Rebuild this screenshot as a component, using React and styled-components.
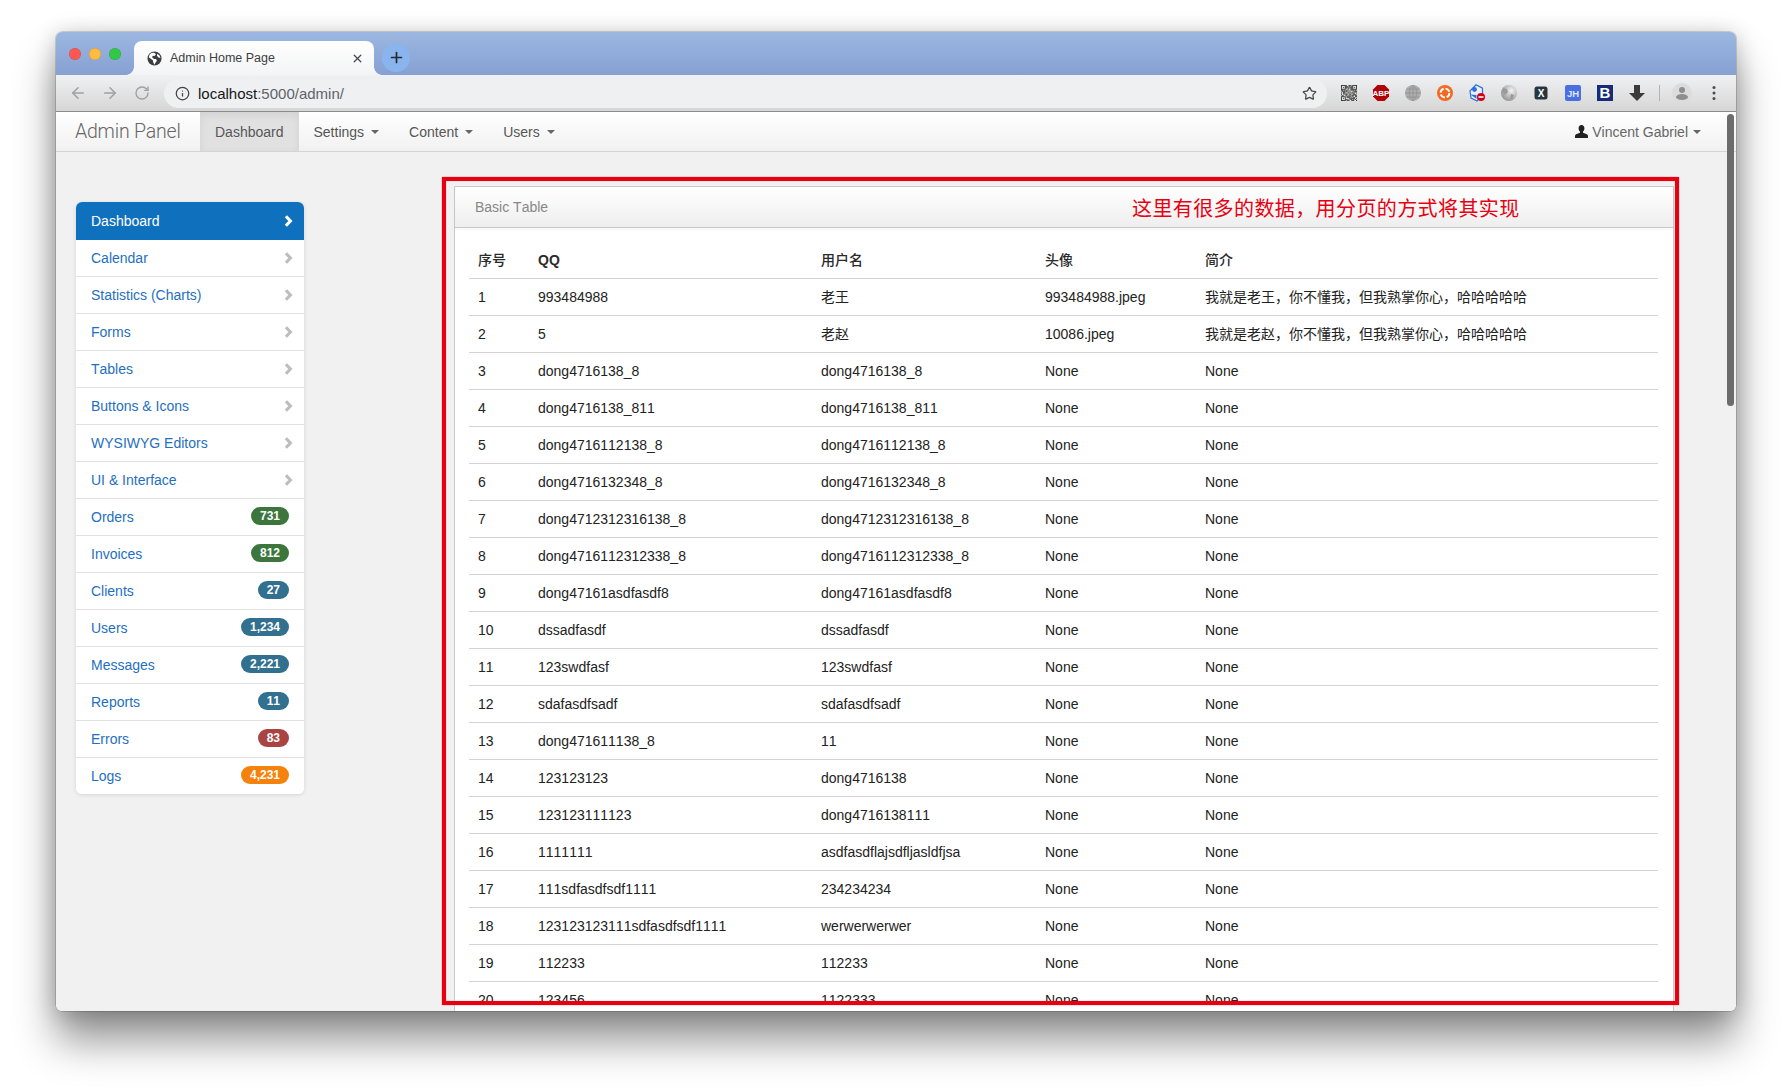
import React from 'react';
import styled, { createGlobalStyle } from 'styled-components';
import { ArrowLeft, ArrowRight, RotateCw, Info, Star, X, Plus } from 'lucide-react';

const Global = createGlobalStyle`
  html, body { margin: 0; padding: 0; background: #fff; overflow: hidden; }
  body { font-family: "Liberation Sans", "Noto Sans CJK SC", sans-serif; font-size: 14px; color: #333; font-kerning: none; }
  * { box-sizing: border-box; }
`;

const Desktop = styled.div`
  height: 1091px;
  padding: 32px 0 0 56px;
  overflow: hidden;
  background: #fff;
`;
const Win = styled.div`
  position: relative;
  width: 1680px;
  height: 979px;
  border-radius: 6px;
  overflow: hidden;
  display: flex;
  flex-direction: column;
`;
const WinShadow = styled.div`
  width: 1680px;
  height: 979px;
  border-radius: 6px;
  box-shadow: 0 30px 42px rgba(0,0,0,.42), 0 2px 22px rgba(0,0,0,.22), 0 0 0 .5px rgba(0,0,0,.28);
`;
const Strip = styled.div`
  height: 43px;
  flex: none;
  display: flex;
  align-items: flex-end;
  padding-left: 13px;
  background: linear-gradient(#9db7e2, #85a0d2);
`;
const Lights = styled.div`
  align-self: flex-start;
  display: flex;
  gap: 8px;
  margin: 16px 13px 0 0;
`;
const Light = styled.span`
  width: 12px;
  height: 12px;
  border-radius: 50%;
  background: ${p => p.$c};
  box-shadow: inset 0 0 0 .5px rgba(0,0,0,.15);
`;
const Tab = styled.div`
  position: relative;
  width: 240px;
  height: 34px;
  display: flex;
  align-items: center;
  padding: 0 10px 0 13px;
  border-radius: 8px 8px 0 0;
  background: linear-gradient(#fff, #f3f4f5);
  &::before, &::after {
    content: "";
    position: absolute;
    bottom: 0;
    width: 8px;
    height: 8px;
  }
  &::before { left: -8px; background: radial-gradient(circle at 0 0, transparent 7.5px, #f3f4f5 8px); }
  &::after { right: -8px; background: radial-gradient(circle at 100% 0, transparent 7.5px, #f3f4f5 8px); }
`;
const TabTitle = styled.span`
  flex: 1;
  margin-left: 8px;
  font-size: 12.5px;
  color: #3c4043;
`;
const NewTab = styled.div`
  align-self: flex-start;
  width: 28px;
  height: 28px;
  margin: 12px 0 0 8px;
  border-radius: 50%;
  background: #8ab4ee;
  color: #26292e;
  display: flex;
  align-items: center;
  justify-content: center;
`;
const Toolbar = styled.div`
  height: 37px;
  flex: none;
  display: flex;
  align-items: center;
  padding-left: 6px;
  background: linear-gradient(#f0f1f3, #d6d6d6);
  border-bottom: 1px solid #8c8c8c;
`;
const ToolBtn = styled.div`
  width: 32px;
  height: 28px;
  flex: none;
  display: flex;
  align-items: center;
  justify-content: center;
  color: ${p => p.$c || '#9fa0a2'};
`;
const Omni = styled.div`
  width: 1163px;
  height: 29px;
  margin: 0 6px;
  flex: none;
  border-radius: 15px;
  background: #eff0f2;
  display: flex;
  align-items: center;
  padding: 0 10px 0 11px;
  color: #45484c;
`;
const Url = styled.div`
  flex: 1;
  margin-left: 8px;
  font-size: 15px;
  color: #5f6368;
  b { font-weight: 400; color: #15171a; }
`;
const Sep = styled.div`
  width: 1px;
  height: 16px;
  margin: 0 6px;
  background: #b4b4b4;
`;
const Navbar = styled.div`
  height: 40px;
  flex: none;
  display: flex;
  align-items: stretch;
  background: linear-gradient(#fff, #f1f1f1);
  border-bottom: 1px solid #d4d4d4;
`;
const Brand = styled.div`
  width: 144px;
  padding: 0 0 0 19px;
  display: flex;
  align-items: center;
  font-family: Roboto, "Liberation Sans", sans-serif;
  font-weight: 300;
  font-size: 19.5px;
  letter-spacing: -.2px;
  color: #666;
`;
const NavItem = styled.div`
  padding: 0 15px;
  display: flex;
  align-items: center;
  color: #555;
  background: ${p => p.$active ? '#e1e1e1' : 'transparent'};
  box-shadow: ${p => p.$active ? 'inset 0 3px 8px rgba(0,0,0,.07)' : 'none'};
  text-shadow: 0 1px 0 rgba(255,255,255,.25);
`;
const Caret = styled.span`
  width: 0;
  height: 0;
  margin-left: ${p => p.$gap || 7}px;
  border-top: 4px solid #666;
  border-left: 4px solid transparent;
  border-right: 4px solid transparent;
`;
const NavRight = styled.div`
  margin-left: auto;
  padding-right: 35px;
  display: flex;
  align-items: center;
  color: #666;
`;
const Main = styled.div`
  flex: 1;
  min-height: 0;
  display: flex;
  align-items: flex-start;
  padding: 34px 0 0 20px;
  background: #f1f1f1;
  overflow: hidden;
`;
const Side = styled.ul`
  width: 228px;
  flex: none;
  list-style: none;
  margin: 16px 150px 0 0;
  padding: 0;
  border-radius: 6px;
  background: #fff;
  box-shadow: 0 1px 4px rgba(0,0,0,.12);
  overflow: hidden;
`;
const SideItem = styled.li`
  height: ${p => p.$active ? 38 : 37}px;
  display: flex;
  align-items: center;
  justify-content: space-between;
  padding: 0 15px 0 15px;
  background: ${p => p.$active ? '#0f71bd' : '#fff'};
  color: ${p => p.$active ? '#fff' : '#1f6fc0'};
  border-bottom: ${p => p.$active ? 0 : 1}px solid #e2e2e2;
  &:last-child { border-bottom: 0; height: 36px; }
`;
const Badge = styled.span`
  height: 18px;
  margin-bottom: 2px;
  padding: 0 9px;
  border-radius: 9px;
  background: ${p => p.$c};
  color: #fff;
  font-size: 12px;
  font-weight: 700;
  line-height: 18px;
`;
const Panel = styled.div`
  width: 1220px;
  flex: none;
  border: 1px solid #c9c9c9;
  background: #fff;
`;
const PanelHead = styled.div`
  height: 41px;
  padding: 0 20px;
  display: flex;
  align-items: center;
  color: #888;
  background: linear-gradient(#fff, #eee);
  border-bottom: 1px solid #c8c8c8;
  box-shadow: 0 2px 3px rgba(0,0,0,.03);
`;
const PanelBody = styled.div`
  padding: 14px 15px 0 14px;
`;
const Table = styled.table`
  width: 1189px;
  table-layout: fixed;
  border-collapse: collapse;
`;
const Col = styled.col`
  width: ${p => p.$w}px;
`;
const Th = styled.th`
  padding: 8px 8px 8px 9px;
  height: 36px;
  text-align: left;
  line-height: 20px;
  color: #2a2a2a;
  font-weight: ${p => p.$latin ? 700 : 500};
`;
const Td = styled.td`
  padding: 8px 8px 8px 9px;
  line-height: 20px;
  color: #222;
  border-top: 1px solid #d4d4d4;
  white-space: nowrap;
`;
const RedBox = styled.div`
  position: absolute;
  left: 386px;
  top: 145px;
  width: 1237px;
  height: 828px;
  border: 4px solid #e60012;
  box-shadow: 0 0 1px rgba(230,0,18,.7), inset 0 0 1px rgba(230,0,18,.7);
  pointer-events: none;
`;
const Note = styled.div`
  position: absolute;
  left: 1076px;
  top: 162px;
  font-family: "Noto Sans CJK SC", sans-serif;
  font-size: 20px;
  letter-spacing: .4px;
  line-height: 28px;
  color: #e60012;
`;
const Scrollbar = styled.div`
  position: absolute;
  left: 1671px;
  top: 82px;
  width: 7px;
  height: 292px;
  border-radius: 4px;
  background: #6c6c6c;
`;
const ExtLabel = styled.text`
  font-family: "Liberation Sans", sans-serif;
  font-weight: 700;
`;

const Globe = () => (
  <svg width="15" height="15" viewBox="0 0 16 16">
    <circle cx="8" cy="8" r="7.5" fill="#3a3d41" />
    <path d="M3 3.2c1.6-1 3.4-1.6 5-1.2L9.6 3.4 8 5.2 6.2 5 5.4 6.6 7.4 8.4 9.6 8.6 10.6 10.4 9 12.6 8 14.6 6.8 12.4 6.2 9.8 3.6 8 1.8 6.6z M11 2.8l2.4 2 1 2.6-2.2-.6-1.6-1.8z" fill="#fff" />
  </svg>
);
const Ext = ({ children }) => (
  <ToolBtn><svg width="20" height="20" viewBox="0 0 20 20">{children}</svg></ToolBtn>
);
const QR_N = 17;
const inFinder = (x, y) => (x < 5 && y < 5) || (x > 11 && y < 5) || (x < 5 && y > 11);
const finderOn = (x, y) => {
  const fx = x > 11 ? x - 12 : x;
  const fy = y > 11 ? y - 12 : y;
  return fx === 0 || fx === 4 || fy === 0 || fy === 4 || (fx === 2 && fy === 2);
};
const qrCells = [];
for (let y = 0; y < QR_N; y++) {
  for (let x = 0; x < QR_N; x++) {
    const on = inFinder(x, y) ? finderOn(x, y) : ((x * 13 + y * 7 + x * y * 5 + (x ^ y)) % 5) < 3;
    if (on) qrCells.push([x, y]);
  }
}
const QR = () => (
  <Ext>
    <rect x="2" y="2" width="16" height="16" fill="#eee" />
    {qrCells.map(([x, y]) => (
      <rect key={`${x}-${y}`} x={2 + x * 16 / QR_N} y={2 + y * 16 / QR_N} width={16 / QR_N} height={16 / QR_N} fill="#222" />
    ))}
  </Ext>
);
const Extensions = () => (
  <>
    <QR />
    <Ext>
      <polygon points="6.5,2 13.5,2 18,6.5 18,13.5 13.5,18 6.5,18 2,13.5 2,6.5" fill="#b20008" />
      <ExtLabel x="10" y="13" fontSize="8" fill="#fff" textAnchor="middle">ABP</ExtLabel>
    </Ext>
    <Ext>
      <circle cx="10" cy="10" r="8" fill="#adadad" />
      <path d="M2 10h16M10 2v16M3.5 6h13M3.5 14h13M10 2c-5 4-5 12 0 16M10 2c5 4 5 12 0 16" stroke="#929292" strokeWidth=".8" fill="none" />
    </Ext>
    <Ext>
      <circle cx="10" cy="10" r="8" fill="#f26a21" />
      <circle cx="10" cy="10" r="4.4" fill="none" stroke="#fff" strokeWidth="2" strokeDasharray="5 1.9" />
    </Ext>
    <Ext>
      <path d="M9 1.8l6.5 3.4v5L10 18l-6-3-1-7z" fill="#e9eefb" stroke="#2f6fdc" strokeWidth="1.2" />
      <circle cx="7.5" cy="6.5" r="2.4" fill="#2f6fdc" />
      <path d="M3.5 11.5l6 .5v4z" fill="#2f6fdc" />
      <circle cx="14" cy="14" r="4" fill="#d0021b" />
      <rect x="11.5" y="13.2" width="5" height="1.6" fill="#fff" />
    </Ext>
    <Ext>
      <defs>
        <radialGradient id="sph" cx=".65" cy=".35" r=".75">
          <stop offset="0" stopColor="#f4f4f4" />
          <stop offset="1" stopColor="#8d8d8d" />
        </radialGradient>
      </defs>
      <circle cx="10" cy="10" r="8" fill="url(#sph)" />
      <path d="M4 5l4 1 1 3-3 3-3-3zM12 11l3 1-2 5-2-2z" fill="#9a9a9a" />
    </Ext>
    <Ext>
      <rect x="3.5" y="3.5" width="13" height="13" rx="2.5" fill="#26363e" />
      <ExtLabel x="10" y="13.5" fontSize="10" fill="#fff" textAnchor="middle">X</ExtLabel>
    </Ext>
    <Ext>
      <rect x="2" y="2" width="16" height="16" rx="2" fill="#4a6fe3" />
      <ExtLabel x="10" y="13.6" fontSize="9.5" fill="#dfe6fb" textAnchor="middle">JH</ExtLabel>
    </Ext>
    <Ext>
      <rect x="2" y="2" width="16" height="16" fill="#162b7a" />
      <ExtLabel x="10" y="15.3" fontSize="15" fill="#fff" textAnchor="middle">B</ExtLabel>
    </Ext>
    <Ext>
      <path d="M7 2h6v8h5l-8 8-8-8h5z" fill="#3b3b3b" />
    </Ext>
    <Sep />
    <Ext>
      <circle cx="10" cy="10" r="10" fill="#dcdcdc" />
      <circle cx="10" cy="7" r="3" fill="#8e8e8e" />
      <ellipse cx="10" cy="14" rx="6" ry="3" fill="#8e8e8e" />
    </Ext>
    <Ext>
      <circle cx="10" cy="4.5" r="1.5" fill="#4a4a4a" />
      <circle cx="10" cy="10" r="1.5" fill="#4a4a4a" />
      <circle cx="10" cy="15.5" r="1.5" fill="#4a4a4a" />
    </Ext>
  </>
);

const UserGlyph = () => (
  <svg width="13" height="13" viewBox="0 0 13 13" style={{ marginRight: 4 }}>
    <path d="M6.5 0C8.4 0 9.4 1.4 9.4 3.2c0 1.3-.5 2.7-1.4 3.4v1.1c1.6.5 4 1.2 4.7 2.2.3.5.3 1.8.3 3.1H0c0-1.3 0-2.6.3-3.1.7-1 3.1-1.7 4.7-2.2V6.6C4.1 5.9 3.6 4.5 3.6 3.2 3.6 1.4 4.6 0 6.5 0z" fill="#222" />
  </svg>
);
const Chevron = ({ c }) => (
  <svg width="9" height="12" viewBox="0 0 9 12" style={{ marginRight: -4, marginBottom: 1 }}>
    <path d="M1.9 1.3 6.4 6 1.9 10.7" fill="none" stroke={c} strokeWidth="3.1" />
  </svg>
);

const G = '#3c763d', B = '#31708f', R = '#a94442', O = '#f5820b';
const menu = [
  ['Dashboard'], ['Calendar'], ['Statistics (Charts)'], ['Forms'], ['Tables'],
  ['Buttons & Icons'], ['WYSIWYG Editors'], ['UI & Interface'],
  ['Orders', '731', G], ['Invoices', '812', G], ['Clients', '27', B], ['Users', '1,234', B],
  ['Messages', '2,221', B], ['Reports', '11', B], ['Errors', '83', R], ['Logs', '4,231', O],
];
const rows = [
  ['993484988', '老王', '993484988.jpeg', '我就是老王，你不懂我，但我熟掌你心，哈哈哈哈哈'],
  ['5', '老赵', '10086.jpeg', '我就是老赵，你不懂我，但我熟掌你心，哈哈哈哈哈'],
  ['dong4716138_8', 'dong4716138_8'],
  ['dong4716138_811', 'dong4716138_811'],
  ['dong4716112138_8', 'dong4716112138_8'],
  ['dong4716132348_8', 'dong4716132348_8'],
  ['dong4712312316138_8', 'dong4712312316138_8'],
  ['dong4716112312338_8', 'dong4716112312338_8'],
  ['dong47161asdfasdf8', 'dong47161asdfasdf8'],
  ['dssadfasdf', 'dssadfasdf'],
  ['123swdfasf', '123swdfasf'],
  ['sdafasdfsadf', 'sdafasdfsadf'],
  ['dong471611138_8', '11'],
  ['123123123', 'dong4716138'],
  ['123123111123', 'dong4716138111'],
  ['1111111', 'asdfasdflajsdfljasldfjsa'],
  ['111sdfasdfsdf1111', '234234234'],
  ['123123123111sdfasdfsdf1111', 'werwerwerwer'],
  ['112233', '112233'],
  ['123456', '1122333'],
];

export default function App() {
  return (
    <Desktop>
      <Global />
      <WinShadow>
        <Win>
          <Strip>
            <Lights>
              <Light $c="#fc5753" />
              <Light $c="#fdbc40" />
              <Light $c="#33c748" />
            </Lights>
            <Tab>
              <Globe />
              <TabTitle>Admin Home Page</TabTitle>
              <X size={13} strokeWidth={2.4} color="#45484c" />
            </Tab>
            <NewTab><Plus size={17} strokeWidth={2.4} style={{ marginTop: -1 }} /></NewTab>
          </Strip>
          <Toolbar>
            <ToolBtn><ArrowLeft size={18} strokeWidth={2} /></ToolBtn>
            <ToolBtn><ArrowRight size={18} strokeWidth={2} /></ToolBtn>
            <ToolBtn><RotateCw size={16} strokeWidth={2} /></ToolBtn>
            <Omni>
              <Info size={15} strokeWidth={2} color="#3f4246" />
              <Url><b>localhost</b>:5000/admin/</Url>
              <Star size={15} strokeWidth={2} />
            </Omni>
            <Extensions />
          </Toolbar>
          <Navbar>
            <Brand>Admin Panel</Brand>
            <NavItem $active>Dashboard</NavItem>
            <NavItem>Settings<Caret /></NavItem>
            <NavItem>Content<Caret /></NavItem>
            <NavItem>Users<Caret /></NavItem>
            <NavRight><UserGlyph />Vincent Gabriel<Caret $gap={5} /></NavRight>
          </Navbar>
          <Main>
            <Side>
              {menu.map(([label, n, c], i) => (
                <SideItem key={label} $active={i === 0}>
                  {label}
                  {n ? <Badge $c={c}>{n}</Badge> : <Chevron c={i === 0 ? '#fff' : '#bdbdbd'} />}
                </SideItem>
              ))}
            </Side>
            <Panel>
              <PanelHead>Basic Table</PanelHead>
              <PanelBody>
                <Table>
                  <colgroup>
                    <Col $w={60} /><Col $w={283} /><Col $w={224} /><Col $w={160} /><Col $w={462} />
                  </colgroup>
                  <thead>
                    <tr>
                      <Th>序号</Th><Th $latin>QQ</Th><Th>用户名</Th><Th>头像</Th><Th>简介</Th>
                    </tr>
                  </thead>
                  <tbody>
                    {rows.map((r, i) => (
                      <tr key={i}>
                        <Td>{i + 1}</Td>
                        <Td>{r[0]}</Td>
                        <Td>{r[1]}</Td>
                        <Td>{r[2] || 'None'}</Td>
                        <Td>{r[3] || 'None'}</Td>
                      </tr>
                    ))}
                  </tbody>
                </Table>
              </PanelBody>
            </Panel>
          </Main>
          <RedBox />
          <Note>这里有很多的数据，用分页的方式将其实现</Note>
          <Scrollbar />
        </Win>
      </WinShadow>
    </Desktop>
  );
}
